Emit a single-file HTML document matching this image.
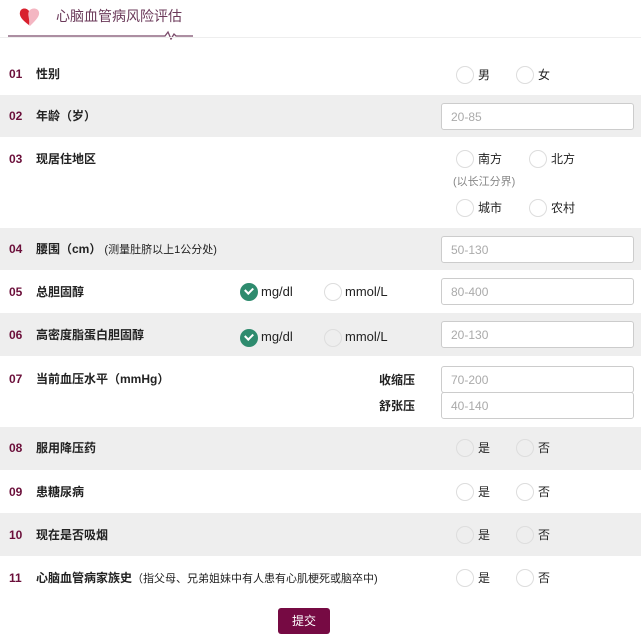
<!DOCTYPE html>
<html><head><meta charset="utf-8"><style>
*{margin:0;padding:0;box-sizing:border-box}
body{width:641px;height:638px;background:#fff;font-family:"Liberation Sans","Noto Sans CJK SC",sans-serif;position:relative;overflow:hidden;color:#222;line-height:16px}
.a{position:absolute}
.row{position:absolute;left:0;width:641px}
.g{background:#eeeeee}
.n{position:absolute;left:9px;font-size:12px;font-weight:bold;color:#6b0f3a}
.l{position:absolute;left:36px;font-size:12px;font-weight:bold;color:#222}
.r{position:absolute;width:18px;height:18px;border:1px solid #ddd;border-radius:50%;background:#fff}
.t{position:absolute;font-size:12px;color:#222}
.u{font-size:13px}
.in{position:absolute;left:441px;width:193px;height:27px;border:1px solid #ccc;border-radius:3px;background:#fff;font-size:12px;color:#aaa;padding:5px 9px}
.ck{position:absolute;width:18px;height:18px;border-radius:50%;background:#2e8b6e}
.ck:after{content:"";position:absolute;left:5px;top:4px;width:6px;height:4px;border-left:2px solid #fff;border-bottom:2px solid #fff;transform:rotate(-45deg)}
</style></head><body>
<svg class="a" style="left:18px;top:6px" width="24" height="22" viewBox="0 0 24 22"><path d="M12 20 C4 14 1 10 2 6 C3 2 8 1 11 5 C14 1 20 2 21 6 C22 10 18 14 12 20Z" fill="#f4b6c2"/><path d="M11 19 C4 14 1 10 2 6 C3 2 8 1 11 5 C9 9 12 12 11 19Z" fill="#d8202d"/></svg>
<div class="a" style="left:56px;top:8px;font-size:14px;color:#6b3a5a">心脑血管病风险评估</div>
<svg class="a" style="left:8px;top:30px" width="185" height="10"><path d="M0 6 H157 L160 2 L163 9 L166 4 L168 6 H185" stroke="#7a4a6a" stroke-width="1.3" fill="none"/></svg>
<div class="a" style="left:0;top:37px;width:641px;height:1px;background:#eee"></div>

<div class="row" style="top:52px;height:43px"><div class="n" style="top:14px">01</div><div class="l" style="top:14px">性别</div>
<div class="r" style="left:456px;top:14px"></div><div class="t" style="left:478px;top:15px">男</div>
<div class="r" style="left:516px;top:14px"></div><div class="t" style="left:538px;top:15px">女</div></div>

<div class="row g" style="top:95px;height:42px"><div class="n" style="top:13px">02</div><div class="l" style="top:13px">年龄（岁）</div><div class="in" style="top:8px">20-85</div></div>

<div class="row" style="top:137px;height:91px"><div class="n" style="top:14px">03</div><div class="l" style="top:14px">现居住地区</div>
<div class="r" style="left:456px;top:13px"></div><div class="t" style="left:478px;top:14px">南方</div>
<div class="r" style="left:529px;top:13px"></div><div class="t" style="left:551px;top:14px">北方</div>
<div class="t" style="left:453px;top:37px;font-size:11px;color:#888">(以长江分界)</div>
<div class="r" style="left:456px;top:62px"></div><div class="t" style="left:478px;top:63px">城市</div>
<div class="r" style="left:529px;top:62px"></div><div class="t" style="left:551px;top:63px">农村</div></div>

<div class="row g" style="top:228px;height:42px"><div class="n" style="top:13px">04</div><div class="l" style="top:13px">腰围（cm）<span style="font-weight:normal;font-size:11px">&nbsp;(测量肚脐以上1公分处)</span></div><div class="in" style="top:8px">50-130</div></div>

<div class="row" style="top:270px;height:43px"><div class="n" style="top:14px">05</div><div class="l" style="top:14px">总胆固醇</div>
<div class="ck" style="left:240px;top:13px"></div><div class="t u" style="left:261px;top:14px">mg/dl</div>
<div class="r" style="left:324px;top:13px"></div><div class="t u" style="left:345px;top:14px">mmol/L</div><div class="in" style="top:8px">80-400</div></div>

<div class="row g" style="top:313px;height:43px"><div class="n" style="top:14px">06</div><div class="l" style="top:14px">高密度脂蛋白胆固醇</div>
<div class="ck" style="left:240px;top:16px"></div><div class="t u" style="left:261px;top:16px">mg/dl</div>
<div class="r" style="left:324px;top:16px;background:#eee"></div><div class="t u" style="left:345px;top:16px">mmol/L</div><div class="in" style="top:8px">20-130</div></div>

<div class="row" style="top:356px;height:71px"><div class="n" style="top:15px">07</div><div class="l" style="top:15px">当前血压水平（mmHg）</div>
<div class="t" style="left:379px;top:16px;font-weight:bold">收缩压</div><div class="in" style="top:10px">70-200</div>
<div class="t" style="left:379px;top:42px;font-weight:bold">舒张压</div><div class="in" style="top:36px">40-140</div></div>

<div class="row g" style="top:427px;height:43px"><div class="n" style="top:13px">08</div><div class="l" style="top:13px">服用降压药</div>
<div class="r" style="left:456px;top:12px;background:#eee"></div><div class="t" style="left:478px;top:13px">是</div>
<div class="r" style="left:516px;top:12px;background:#eee"></div><div class="t" style="left:538px;top:13px">否</div></div>

<div class="row" style="top:470px;height:43px"><div class="n" style="top:14px">09</div><div class="l" style="top:14px">患糖尿病</div>
<div class="r" style="left:456px;top:13px"></div><div class="t" style="left:478px;top:14px">是</div>
<div class="r" style="left:516px;top:13px"></div><div class="t" style="left:538px;top:14px">否</div></div>

<div class="row g" style="top:513px;height:43px"><div class="n" style="top:14px">10</div><div class="l" style="top:14px">现在是否吸烟</div>
<div class="r" style="left:456px;top:13px;background:#eee"></div><div class="t" style="left:478px;top:14px">是</div>
<div class="r" style="left:516px;top:13px;background:#eee"></div><div class="t" style="left:538px;top:14px">否</div></div>

<div class="row" style="top:556px;height:44px"><div class="n" style="top:14px">11</div><div class="l" style="top:14px">心脑血管病家族史<span style="font-weight:normal;font-size:11px">（指父母、兄弟姐妹中有人患有心肌梗死或脑卒中)</span></div>
<div class="r" style="left:456px;top:13px"></div><div class="t" style="left:478px;top:14px">是</div>
<div class="r" style="left:516px;top:13px"></div><div class="t" style="left:538px;top:14px">否</div></div>

<div class="a" style="left:278px;top:608px;width:52px;height:26px;background:#760a43;border-radius:3px;color:#fff;font-size:12px;text-align:center;line-height:26px">提交</div>
</body></html>
